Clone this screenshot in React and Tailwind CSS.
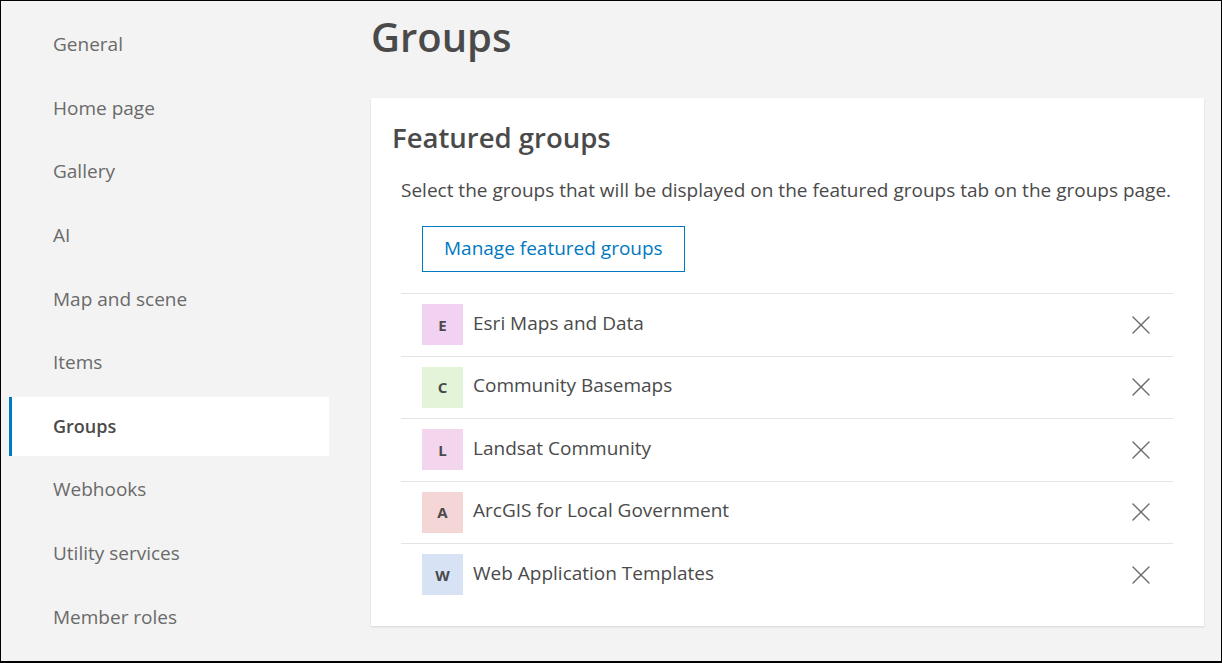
import { X } from 'lucide-react';

const navItems = [
  'General',
  'Home page',
  'Gallery',
  'AI',
  'Map and scene',
  'Items',
  'Groups',
  'Webhooks',
  'Utility services',
  'Member roles',
];

const groups = [
  { letter: 'E', name: 'Esri Maps and Data', tile: 'bg-[#f1d2f3]' },
  { letter: 'C', name: 'Community Basemaps', tile: 'bg-[#e4f4d9]' },
  { letter: 'L', name: 'Landsat Community', tile: 'bg-[#f3d5ee]' },
  { letter: 'A', name: 'ArcGIS for Local Government', tile: 'bg-[#f5d6d6]' },
  { letter: 'W', name: 'Web Application Templates', tile: 'bg-[#d7e2f5]' },
];

function Sidebar() {
  return (
    <nav className="w-[328px] shrink-0 pt-[14px] pl-[8px] flex flex-col gap-[4.6px]">
      {navItems.map((item) => {
        const active = item === 'Groups';
        return (
          <div
            key={item}
            className={
              active
                ? 'h-[59px] flex items-center pl-[41px] bg-white border-l-[3px] border-[#0079c1] text-[#4a4a4a] font-semibold'
                : 'h-[59px] flex items-center pl-[44px] text-[#6a6a6a]'
            }
          >
            <span className={active ? 'text-[18px]' : 'text-[19px]'}>{item}</span>
          </div>
        );
      })}
    </nav>
  );
}

function GroupRow({ group }) {
  return (
    <div className="h-[62.5px] flex items-center pl-[21px] pr-[16px] border-t border-[#e4e4e4]">
      <div className={`w-[41px] h-[41px] flex items-center justify-center text-[15px] font-bold text-[#4a4a4a] ${group.tile}`}>
        {group.letter}
      </div>
      <span className="ml-[10px] pb-[4px] text-[19px] text-[#4a4a4a] flex-1">{group.name}</span>
      <button className="w-[32px] h-[32px] flex items-center justify-center text-[#6a6a6a]">
        <X size={32} strokeWidth={1.05} />
      </button>
    </div>
  );
}

export default function App() {
  return (
    <div
      className="w-[1222px] h-[663px] overflow-hidden bg-[#f3f3f3] border border-b-2 border-black flex"
      style={{ fontFamily: '"Open Sans", "Noto Sans", sans-serif' }}
    >
      <Sidebar />
      <main className="flex-1 pl-[42px] pr-[17px]">
        <h1 className="mt-[11px] text-[40px] leading-[50px] font-semibold text-[#4a4a4a]">Groups</h1>
        <section className="mt-[36px] bg-white shadow-[0_1px_2px_rgba(0,0,0,0.12)] pt-[20px] pb-[20px]">
          <h2 className="pl-[21px] text-[27.5px] leading-[40px] font-semibold text-[#4a4a4a]">Featured groups</h2>
          <div className="pl-[30px] pr-[31px]">
            <p className="mt-[19px] text-[19px] leading-[26px] text-[#4a4a4a]">
              Select the groups that will be displayed on the featured groups tab on the groups page.
            </p>
            <div className="pl-[21px] mt-[23px] mb-[21px]">
              <button className="h-[46px] px-[21px] pb-[2px] border border-[#0079c1] text-[#0079c1] text-[19px]">
                Manage featured groups
              </button>
            </div>
            <div>
              {groups.map((g) => (
                <GroupRow key={g.letter} group={g} />
              ))}
            </div>
          </div>
        </section>
      </main>
    </div>
  );
}
